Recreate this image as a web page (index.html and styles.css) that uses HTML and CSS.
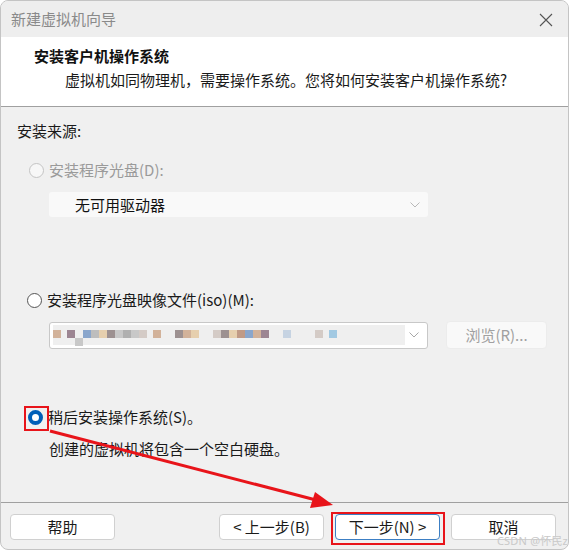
FILE: index.html
```html
<!DOCTYPE html>
<html lang="zh">
<head>
<meta charset="utf-8">
<title>新建虚拟机向导</title>
<link rel="stylesheet" href="styles.css">
</head>
<body>
<div class="window">
  <div class="titlebar">
    <span class="title">新建虚拟机向导</span>
    <svg class="close" width="14" height="14" viewBox="0 0 14 14"><path d="M1 1L13 13M13 1L1 13" stroke="#555" stroke-width="1.1" fill="none"/></svg>
  </div>
  <div class="header">
    <div class="heading">安装客户机操作系统</div>
    <div class="subtitle">虚拟机如同物理机，需要操作系统。您将如何安装客户机操作系统?</div>
  </div>
  <div class="content">
    <div class="source">安装来源:</div>

    <label class="radio-row disabled r1">
      <span class="radio"></span>
      <span>安装程序光盘(D):</span>
    </label>
    <div class="select s1">
      <span class="select-text">无可用驱动器</span>
      <svg class="chev" width="10" height="6" viewBox="0 0 10 6"><path d="M0.5 0.5L5 5L9.5 0.5" stroke="#b8b8b8" fill="none"/></svg>
    </div>

    <label class="radio-row r2">
      <span class="radio"></span>
      <span>安装程序光盘映像文件(iso)(M):</span>
    </label>
    <div class="iso-row">
      <div class="select combo">
        <div class="mosaic">
          <span class="mb c1"></span><span class="gap6"></span>
          <span class="mb c2"></span><span class="mb low c3"></span><span class="mb c4"></span><span class="mb c5"></span><span class="mb c6"></span><span class="mb c7"></span>
          <span class="mb c3"></span><span class="mb c8"></span><span class="mb c3"></span><span class="mb c9"></span><span class="gap6"></span>
          <span class="mb c1"></span><span class="gap12"></span>
          <span class="mb c7"></span><span class="mb c1"></span><span class="mb c6"></span><span class="gap12"></span>
          <span class="mb c9"></span><span class="mb c7"></span><span class="mb c6"></span><span class="mb c10"></span><span class="mb c4"></span><span class="mb c1"></span><span class="mb c2"></span><span class="gap12"></span>
          <span class="mb c12"></span><span class="gap22"></span>
          <span class="mb c9"></span><span class="gap6"></span><span class="mb c11"></span>
        </div>
        <svg class="chev" width="10" height="6" viewBox="0 0 10 6"><path d="M0.5 0.5L5 5L9.5 0.5" stroke="#a8a8a8" fill="none"/></svg>
      </div>
      <div class="btn browse">浏览(R)...</div>
    </div>

    <label class="radio-row r3">
      <span class="radio checked"></span>
      <span>稍后安装操作系统(S)。</span>
    </label>
    <div class="desc">创建的虚拟机将包含一个空白硬盘。</div>
  </div>
  <div class="footer">
    <div class="btn help">帮助</div>
    <div class="nav">
      <div class="btn">&lt; 上一步(B)</div>
      <div class="btn primary">下一步(N) &gt;</div>
      <div class="btn">取消</div>
    </div>
  </div>
  <div class="watermark">CSDN @怀民z</div>
</div>

<div class="mark mark-radio"></div>
<div class="mark mark-next"></div>
<svg class="arrow" width="570" height="551" viewBox="0 0 570 551">
  <line x1="50" y1="431" x2="316" y2="500" stroke="#e8141a" stroke-width="3"/>
  <polygon points="333,505 310,508 315,492" fill="#e8141a"/>
</svg>
</body>
</html>
```

FILE: styles.css
```css
* { box-sizing: border-box; }

html, body {
  margin: 0;
  padding: 0;
  background: #ffffff;
}

body {
  width: 570px;
  height: 551px;
  position: relative;
  overflow: hidden;
  font-family: "Noto Sans CJK SC", "Noto Sans", sans-serif;
  font-size: 15px;
  color: #1a1a1a;
}

.window {
  width: 569px;
  height: 550px;
  border: 1px solid #c4c4c4;
  border-radius: 8px;
  overflow: hidden;
  background: #f0f0f0;
  display: flex;
  flex-direction: column;
  position: relative;
}

.titlebar {
  height: 36px;
  flex: none;
  display: flex;
  align-items: center;
  justify-content: space-between;
  padding: 0 15px 0 10px;
  background: #eeeeee;
}

.title {
  color: #8a8a8a;
  font-size: 15px;
  line-height: 20px;
}

.close { display: block; margin-top: 1px; }

.header {
  height: 70px;
  flex: none;
  background: #ffffff;
  border-bottom: 1px solid #a0a0a0;
  padding: 8px 0 0 33px;
}

.heading {
  font-weight: bold;
  font-size: 15px;
  line-height: 22px;
  color: #111;
}

.subtitle {
  margin-top: 2px;
  padding-left: 31px;
  line-height: 22px;
  color: #1a1a1a;
}

.content {
  flex: 1;
  min-height: 0;
  padding: 13px 0 0 16px;
  display: flex;
  flex-direction: column;
  align-items: flex-start;
}

.source { line-height: 22px; }

.radio-row {
  display: flex;
  align-items: center;
  gap: 5px;
  line-height: 22px;
}

.radio {
  width: 15px;
  height: 15px;
  border-radius: 50%;
  border: 1px solid #555;
  background: #fff;
  flex: none;
}

.disabled { color: #9a9a9a; }
.disabled .radio { border-color: #c4c4c4; background: #f7f7f7; }

.radio.checked {
  border: 4px solid #005fb8;
  background: #fff;
}

.r1 { margin: 17px 0 0 12px; }
.r2 { margin: 72px 0 0 10px; }
.r3 { margin: 57px 0 0 11px; }

.select {
  height: 25px;
  width: 379px;
  background: #f9f9f9;
  border-radius: 3px;
  display: flex;
  align-items: center;
  justify-content: space-between;
  padding: 0 8px 0 26px;
}

.s1 { margin: 11px 0 0 32px; }

.select-text { color: #111; line-height: 20px; }

.iso-row {
  display: flex;
  align-items: center;
  gap: 18px;
  margin: 10px 0 0 32px;
}

.combo {
  height: 27px;
  background: #ffffff;
  border: 1px solid #c8c8c8;
  padding: 0 8px 0 3px;
}

.mosaic {
  display: flex;
  align-items: flex-start;
  height: 20px;
  width: 352px;
  background: #efefef;
  padding-top: 5px;
}

.mb { width: 8px; height: 8px; flex: none; }
.mb.low { margin-top: 8px; }
.gap6 { width: 6px; flex: none; }
.gap12 { width: 14px; flex: none; }
.gap22 { width: 24px; flex: none; }

.c1 { background: #d2b29a; }
.c2 { background: #9c8592; }
.c3 { background: #c8c8c8; }
.c4 { background: #8aa6cc; }
.c5 { background: #bdbdbd; }
.c6 { background: #e6cfae; }
.c7 { background: #9d9191; }
.c8 { background: #b0b0b0; }
.c9 { background: #d4cbc6; }
.c10 { background: #c09a86; }
.c11 { background: #a2c9e2; }
.c12 { background: #c6d3e2; }

.btn {
  height: 26px;
  width: 105px;
  background: #ffffff;
  border: 1px solid #d0d0d0;
  border-radius: 4px;
  display: flex;
  align-items: center;
  justify-content: center;
  line-height: 20px;
  color: #1a1a1a;
}

.browse {
  width: 101px;
  height: 28px;
  background: #f9f9f9;
  border-color: #ececec;
  color: #a0a0a0;
}

.desc {
  margin: 10px 0 0 32px;
  line-height: 22px;
  color: #1a1a1a;
}

.footer {
  height: 47px;
  flex: none;
  border-top: 1px solid #a0a0a0;
  display: flex;
  align-items: center;
  justify-content: space-between;
  padding: 2px 12px 0 9px;
}

.nav { display: flex; gap: 11px; }

.primary { border-color: #3c7fc4; }

.watermark {
  position: absolute;
  right: 0;
  bottom: 1px;
  font-family: "Noto Sans", "Noto Sans CJK SC", sans-serif;
  font-size: 11px;
  color: #c9c9c9;
  line-height: 14px;
  letter-spacing: 0.2px;
}

.mark {
  position: absolute;
  border: 2px solid #e8141a;
}

.mark-radio { left: 24px; top: 406px; width: 25px; height: 25px; }
.mark-next { left: 331px; top: 512px; width: 114px; height: 33px; }

.arrow { position: absolute; left: 0; top: 0; pointer-events: none; }
```
